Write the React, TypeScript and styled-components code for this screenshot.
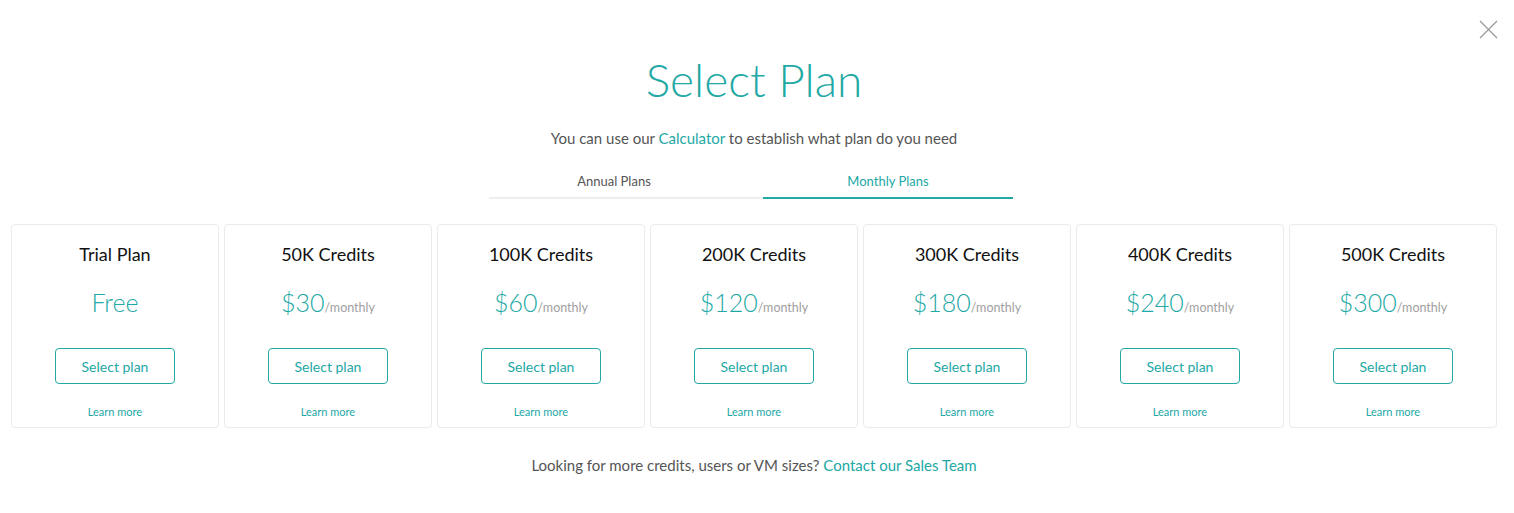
import React from "react";
import styled, { createGlobalStyle } from "styled-components";

const TEAL = "#22a8a5";

const Global = createGlobalStyle`
  html, body { margin: 0; padding: 0; background: #fff; }
  body { font-family: Lato, "Liberation Sans", sans-serif; -webkit-font-smoothing: antialiased; }
  * { box-sizing: border-box; }
`;

const Modal = styled.div`
  position: relative;
  width: 1514px;
  height: 513px;
  background: #fff;
  padding: 50px 17px 0 11px;
`;

const Close = styled.button`
  position: absolute;
  top: 20px;
  right: 16px;
  width: 19px;
  height: 19px;
  padding: 0;
  border: 0;
  background: transparent;
  cursor: pointer;
  display: flex;
`;

const Title = styled.h1`
  margin: 0;
  text-align: center;
  font-size: 46px;
  line-height: 60px;
  font-weight: 300;
  color: ${TEAL};
`;

const Subtitle = styled.p`
  margin: 16px 0 0;
  text-align: center;
  font-size: 15px;
  line-height: 24px;
  color: #555;
`;

const Link = styled.a`
  color: ${TEAL};
  text-decoration: none;
  cursor: pointer;
`;

const Tabs = styled.div`
  margin: 21px auto 0;
  width: 524px;
  display: grid;
  grid-template-columns: 250px 250px;
  column-gap: 24px;
  border-bottom: 2px solid #eeeeee;
  transform: translateX(-3px);
`;

const Tab = styled.div<{ $active?: boolean }>`
  text-align: center;
  font-size: 13px;
  line-height: 20px;
  padding-bottom: 6px;
  margin-bottom: -2px;
  color: ${(p) => (p.$active ? TEAL : "#555")};
  border-bottom: 2px solid ${(p) => (p.$active ? TEAL : "transparent")};
  cursor: pointer;
`;

const Cards = styled.div`
  margin-top: 25px;
  display: grid;
  grid-template-columns: repeat(7, 208px);
  gap: 5px;
`;

const Card = styled.div`
  height: 204px;
  border: 1px solid #ebebeb;
  border-radius: 4px;
  display: flex;
  flex-direction: column;
  align-items: center;
  padding-top: 15px;
`;

const CardTitle = styled.div`
  font-size: 18px;
  line-height: 28px;
  color: #111;
`;

const Price = styled.div`
  margin-top: 17px;
  height: 36px;
  display: flex;
  align-items: baseline;
  color: ${TEAL};
  font-size: 25px;
  line-height: 34px;
  font-weight: 300;
`;

const Per = styled.span`
  font-size: 12.5px;
  color: #a0a0a0;
  font-weight: 400;
`;

const SelectBtn = styled.button`
  margin-top: 27px;
  width: 120px;
  height: 36px;
  border: 1px solid ${TEAL};
  border-radius: 4px;
  background: #fff;
  color: ${TEAL};
  font-family: inherit;
  font-size: 14px;
  cursor: pointer;
`;

const LearnMore = styled.a`
  margin-top: 20px;
  font-size: 11px;
  line-height: 16px;
  color: ${TEAL};
  cursor: pointer;
`;

const Footer = styled.p`
  margin: 26px 0 0;
  text-align: center;
  font-size: 15px;
  line-height: 22px;
  color: #555;
`;

const plans = [
  { name: "Trial Plan", price: "Free", monthly: false },
  { name: "50K Credits", price: "$30", monthly: true },
  { name: "100K Credits", price: "$60", monthly: true },
  { name: "200K Credits", price: "$120", monthly: true },
  { name: "300K Credits", price: "$180", monthly: true },
  { name: "400K Credits", price: "$240", monthly: true },
  { name: "500K Credits", price: "$300", monthly: true },
];

export default function App() {
  return (
    <>
      <Global />
      <Modal>
        <Close aria-label="Close">
          <svg width="19" height="19" viewBox="0 0 19 19">
            <path d="M1 1L18 18M18 1L1 18" stroke="#9a9a9a" strokeWidth="1.2" fill="none" />
          </svg>
        </Close>
        <Title>Select Plan</Title>
        <Subtitle>
          You can use our <Link>Calculator</Link> to establish what plan do you need
        </Subtitle>
        <Tabs>
          <Tab>Annual Plans</Tab>
          <Tab $active>Monthly Plans</Tab>
        </Tabs>
        <Cards>
          {plans.map((p) => (
            <Card key={p.name}>
              <CardTitle>{p.name}</CardTitle>
              <Price>
                {p.price}
                {p.monthly && <Per>/monthly</Per>}
              </Price>
              <SelectBtn>Select plan</SelectBtn>
              <LearnMore>Learn more</LearnMore>
            </Card>
          ))}
        </Cards>
        <Footer>
          Looking for more credits, users or VM sizes? <Link>Contact our Sales Team</Link>
        </Footer>
      </Modal>
    </>
  );
}
